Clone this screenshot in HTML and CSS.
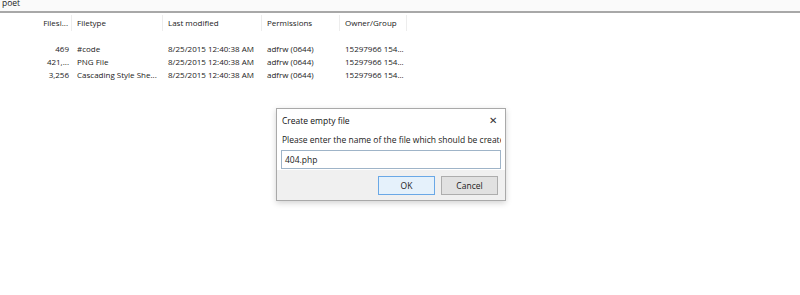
FILE: index.html
```html
<!DOCTYPE html>
<html lang="en">
<head>
  <meta charset="UTF-8">
  <title>poet</title>
  <link rel="stylesheet" href="styles.css">
</head>
<body>
  <div class="path-bar"><span class="path">poet</span></div>
  <div class="file-list">
    <div class="row header">
      <div class="cell spacer"></div>
      <div class="cell size">Filesi...</div>
      <div class="cell">Filetype</div>
      <div class="cell">Last modified</div>
      <div class="cell">Permissions</div>
      <div class="cell">Owner/Group</div>
    </div>
    <div class="rows">
      <div class="row">
        <div class="cell spacer"></div>
        <div class="cell size">469</div>
        <div class="cell">#code</div>
        <div class="cell">8/25/2015 12:40:38 AM</div>
        <div class="cell">adfrw (0644)</div>
        <div class="cell">15297966 154...</div>
      </div>
      <div class="row">
        <div class="cell spacer"></div>
        <div class="cell size">421,...</div>
        <div class="cell">PNG File</div>
        <div class="cell">8/25/2015 12:40:38 AM</div>
        <div class="cell">adfrw (0644)</div>
        <div class="cell">15297966 154...</div>
      </div>
      <div class="row">
        <div class="cell spacer"></div>
        <div class="cell size">3,256</div>
        <div class="cell">Cascading Style She...</div>
        <div class="cell">8/25/2015 12:40:38 AM</div>
        <div class="cell">adfrw (0644)</div>
        <div class="cell">15297966 154...</div>
      </div>
    </div>
  </div>

  <div class="dialog">
    <div class="dialog-title">
      <span>Create empty file</span>
      <span class="close">&#x2715;</span>
    </div>
    <div class="dialog-body">
      <div class="prompt">Please enter the name of the file which should be created:</div>
      <div class="input">404.php</div>
    </div>
    <div class="dialog-footer">
      <button class="btn default">OK</button>
      <button class="btn">Cancel</button>
    </div>
  </div>
</body>
</html>
```

FILE: styles.css
```css
body {
  margin: 0;
  background-color: #fff;
  font-family: "Open Sans", "Noto Sans", sans-serif;
  font-size: 8px;
  color: #222;
  height: 295px;
  overflow: hidden;
}
.path-bar {
  height: 11px;
  background-color: #fafafa;
  border-bottom: 2px solid #a8a8a8;
  overflow: hidden;
}
.path {
  display: block;
  margin-top: -4px;
  padding-left: 2px;
  line-height: 13px;
  font-size: 8.5px;
}
.file-list {
  display: flex;
  flex-direction: column;
}
.row {
  display: grid;
  grid-template-columns: 40px 32px 91px 99px 78px 67px;
  height: 13px;
  line-height: 13px;
  white-space: nowrap;
}
.row.header {
  height: 16px;
  line-height: 16px;
  margin-top: 2px;
}
.row.header .cell {
  border-right: 1px solid #ededed;
}
.row.header .spacer {
  border-right: none;
}
.rows {
  margin-top: 11px;
}
.cell {
  padding-left: 5px;
  overflow: hidden;
}
.cell.size {
  text-align: right;
  padding-left: 0;
  padding-right: 3px;
}
.dialog {
  position: absolute;
  left: 276px;
  top: 108px;
  width: 228px;
  height: 91px;
  border: 1px solid #a9a9a9;
  background-color: #fff;
  box-shadow: 0 2px 6px rgba(0, 0, 0, 0.18);
  display: flex;
  flex-direction: column;
  font-size: 8.5px;
}
.dialog-title {
  height: 22px;
  display: flex;
  align-items: center;
  justify-content: space-between;
  padding: 0 8px 0 5px;
  color: #111;
}
.close {
  font-size: 10px;
  color: #333;
}
.dialog-body {
  padding: 2px 4px 0 4px;
  height: 37px;
}
.prompt {
  white-space: nowrap;
  overflow: hidden;
  line-height: 14px;
  padding-left: 1px;
}
.input {
  margin-top: 3px;
  height: 17px;
  line-height: 17px;
  border: 1px solid #9fb4c8;
  padding-left: 3px;
}
.dialog-footer {
  flex: 1;
  background-color: #f0f0f0;
  display: flex;
  justify-content: flex-end;
  align-items: center;
  gap: 6px;
  padding-right: 7px;
}
.btn {
  width: 57px;
  height: 19px;
  font-family: inherit;
  font-size: 8.5px;
  color: #222;
  background-color: #e1e1e1;
  border: 1px solid #adadad;
  padding: 0;
}
.btn.default {
  background-color: #e5f1fb;
  border-color: #6aa8e6;
}
```
